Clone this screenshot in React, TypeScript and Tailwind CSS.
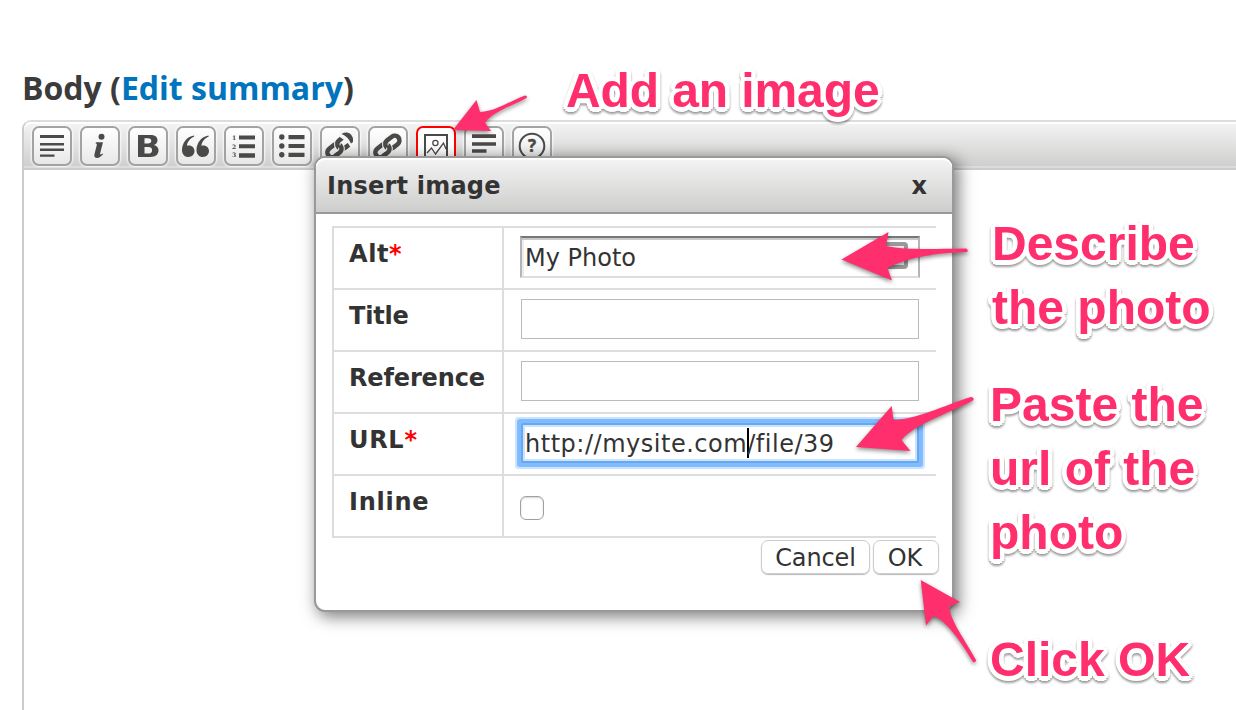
import React from "react";

const INK = "#4a4a48";
const FACE = "#f6f6f6";

function ToolButton({ active = false, children }: { active?: boolean; children: React.ReactNode }) {
  return (
    <div
      className={
        "flex h-10 w-10 shrink-0 items-center justify-center rounded-[7px] border-2 bg-gradient-to-b from-white " +
        (active
          ? "border-[#f00] to-white"
          : "border-[#a3a3a3] to-[#e8e8e8] shadow-[0_0_2px_1px_rgba(255,255,255,0.8)]")
      }
    >
      {children}
    </div>
  );
}

function Glyph({ children }: { children: React.ReactNode }) {
  return (
    <svg width="36" height="36" viewBox="2 2 36 36" className="block" fill={INK}>
      {children}
    </svg>
  );
}

function Chain() {
  return (
    <g fill="none" transform="rotate(-38 20 20)">
      <rect x="5" y="15.500" width="15.500" height="9.500" rx="4.750" stroke={INK} strokeWidth="4.500" />
      <rect x="18" y="15" width="15.500" height="9.500" rx="4.750" stroke={FACE} strokeWidth="6.500" />
      <rect x="18" y="15" width="15.500" height="9.500" rx="4.750" stroke={INK} strokeWidth="4.500" />
      <path d="M13.500 25h2.300a4.700 4.700 0 0 0 4.700-4.700" stroke={FACE} strokeWidth="6.500" />
      <path d="M10.500 25h5.300a4.700 4.700 0 0 0 4.700-4.700v-.8" stroke={INK} strokeWidth="4.500" />
    </g>
  );
}

function Toolbar() {
  return (
    <div className="flex h-[46px] gap-2 rounded-tl-[7px] border-b-2 border-[#dcdcdc] bg-gradient-to-b from-[#f4f4f4] to-[#cfd0ce] pl-2 pt-[4px] shadow-[inset_0_2px_0_#fff]">
      <ToolButton>
        <Glyph>
          <path d="M8 9h24v3H8zM8 17h24v2.400H8zM8 22.600h24V25H8zM8 28.400h14.500v2.400H8z" />
        </Glyph>
      </ToolButton>
      <ToolButton>
        <Glyph>
          <circle cx="21.500" cy="10.800" r="3" />
          <path d="M16 16.200h7l-2.900 11.300c-.3 1.300.8 1.200 2.400-.1l.6.900c-2.200 2.400-4 3.600-6 3.600-2.500 0-3.200-1.700-2.600-4l2.300-9c.2-1-.3-1.300-1.300-1.300z" />
        </Glyph>
      </ToolButton>
      <ToolButton>
        <Glyph>
          <path
            fillRule="evenodd"
            d="M10 9h12c5 0 7.500 1.800 7.500 5.200 0 2.300-1.300 4-3.600 4.700 3 .7 4.600 2.600 4.600 5.400 0 4.200-3 6.700-8.200 6.700H10zM16.500 12.200v5.300h3.300c2.300 0 3.500-.9 3.500-2.700 0-1.700-1.200-2.600-3.500-2.600zM16.500 20.900v6.700h3.800c2.500 0 3.800-1.200 3.800-3.400s-1.300-3.300-3.900-3.300z"
          />
        </Glyph>
      </ToolButton>
      <ToolButton>
        <Glyph>
          <path d="M18 9.500C10.500 10.500 6 17.500 6 24c0 4.300 2.600 7 6.400 7 3.500 0 6.100-2.500 6.100-5.900 0-3.300-2.400-5.700-5.600-5.700-.8 0-1.600.2-2 .4.300-3.400 3-7.600 7.400-9.200z" />
          <path d="M32.500 9.500c-7.500 1-12 8-12 14.500 0 4.300 2.600 7 6.400 7 3.500 0 6.100-2.500 6.100-5.900 0-3.300-2.400-5.700-5.600-5.700-.8 0-1.600.2-2 .4.300-3.400 3-7.600 7.400-9.200z" />
        </Glyph>
      </ToolButton>
      <ToolButton>
        <Glyph>
          <path d="M15 9.500h16v4H15zM15 18.300h16v4H15zM15 27.200h16v4.600H15z" />
          <g fontFamily="DejaVu Serif, serif" fontWeight="bold" fontSize="6">
            <text x="8" y="14.200">1</text>
            <text x="8" y="22.700">2</text>
            <text x="8" y="31.200">3</text>
          </g>
        </Glyph>
      </ToolButton>
      <ToolButton>
        <Glyph>
          <path d="M16.500 9h16v4.200h-16zM16.500 18h16v4h-16zM16.500 26.800h16V31h-16z" />
          <circle cx="9.800" cy="11" r="2.700" />
          <circle cx="9.800" cy="20" r="2.700" />
          <circle cx="9.800" cy="28.800" r="2.700" />
        </Glyph>
      </ToolButton>
      <ToolButton>
        <Glyph>
          <Chain />
          <path d="M19 4h17v18h-5L27.500 16.500 20 11z" fill={FACE} />
          <path d="M21.500 8C26.500 5 31.500 7 33 12.500v3.500l-2 1.500C29 13 26.500 10 21.500 8z" />
        </Glyph>
      </ToolButton>
      <ToolButton>
        <Glyph>
          <Chain />
        </Glyph>
      </ToolButton>
      <ToolButton active>
        <Glyph>
          <g fill="none" stroke={INK}>
            <path d="M9 9h22v23H9z" strokeWidth="2" />
            <circle cx="19.400" cy="17" r="2.600" strokeWidth="1.300" />
            <path d="M11 27l4.500-5 4 6 8-11 2.500 6" strokeWidth="1.300" />
          </g>
        </Glyph>
      </ToolButton>
      <ToolButton>
        <Glyph>
          <path d="M8 8.300h24v3.800H8zM8 16.300h24v3.500H8zM8 23.200h14.500v3.500H8z" />
        </Glyph>
      </ToolButton>
      <ToolButton>
        <Glyph>
          <circle cx="20" cy="20" r="12.300" fill="none" stroke={INK} strokeWidth="2" />
          <text
            x="20"
            y="26"
            textAnchor="middle"
            fontFamily="Open Sans, sans-serif"
            fontWeight="bold"
            fontSize="17"
            stroke={INK}
            strokeWidth="0.500"
          >
            ?
          </text>
        </Glyph>
      </ToolButton>
    </div>
  );
}

function Row({
  label,
  spacing = "tracking-[-0.2px]",
  required,
  children,
}: {
  label: string;
  spacing?: string;
  required?: boolean;
  children?: React.ReactNode;
}) {
  return (
    <div className="flex h-[62px] border-b-2 border-[#ddd]">
      <div
        className={`w-[170px] shrink-0 border-r-2 border-[#ddd] pl-[15px] pt-[10px] font-bold leading-8 ${spacing}`}
      >
        {label}
        {required && <span className="text-[#f00]">*</span>}
      </div>
      {children}
    </div>
  );
}

function Dialog() {
  return (
    <div className="absolute left-[314px] top-[156px] h-[456px] w-[640px] rounded-[11px] border-2 border-[#999] bg-white font-['DejaVu_Sans',Verdana,sans-serif] text-[24px] text-[#333] shadow-[4px_4px_16px_1px_rgba(0,0,0,0.5)]">
      <div className="flex h-[56px] items-center justify-between rounded-t-[9px] border-b-2 border-[#999] bg-gradient-to-b from-[#f4f4f4] to-[#cdcecc] pl-[11px] pr-[25px] font-bold shadow-[inset_0_2px_0_#fff]">
        <span className="pt-[2px] tracking-[0.22px]">Insert image</span>
        <span className="pt-[2px]">x</span>
      </div>
      <div className="px-4 pt-3">
        <div className="border-l-2 border-t-2 border-[#ddd]">
          <Row label="Alt" spacing="tracking-[0.6px]" required>
            <div className="ml-4 mt-2 flex h-[42px] w-[400px] items-center justify-between border-2 border-b-[#ddd] border-l-[#b5b5b5] border-r-[#b5b5b5] border-t-[#777] pl-[3px] pr-[10px] shadow-[inset_0_2px_0_#c8c8c8,inset_2px_0_0_#ececec]">
              <span className="pt-px">My Photo</span>
              <span className="mt-[-4px] h-[27px] w-[28px] rounded-[4px] border-4 border-[#999] bg-[#eee]" />
            </div>
          </Row>
          <Row label="Title">
            <div className="ml-[17px] mt-[9px] h-10 w-[398px] border border-[#bbb]" />
          </Row>
          <Row label="Reference" spacing="tracking-[-0.15px]">
            <div className="ml-[17px] mt-[9px] h-10 w-[398px] border border-[#bbb]" />
          </Row>
          <Row label="URL" spacing="tracking-[0.7px]" required>
            <div className="ml-[17px] mt-[9px] flex h-10 w-[398px] items-center rounded-[1px] border-2 border-[#68a8f0] pl-[2px] tracking-[0.52px] shadow-[0_0_0_4px_#7fbbfd,0_0_0_6px_#cae3ff,inset_0_0_0_2px_#cae3ff] [font-variant-ligatures:none]">
              <span className="whitespace-nowrap pt-px">http://mysite.com</span>
              <span className="-mr-[2px] h-[30px] w-[2px] bg-black" />
              <span className="pt-px">/file/39</span>
            </div>
          </Row>
          <Row label="Inline" spacing="tracking-[0.75px]">
            <div className="ml-4 mt-5 h-6 w-6 rounded-[6px] border border-[#a0a0a0] shadow-[inset_0_1px_2px_rgba(0,0,0,0.18)]" />
          </Row>
        </div>
      </div>
      <div className="flex justify-end gap-[3px] pr-[13px] pt-[2px]">
        <div className="flex h-[34px] w-[109px] items-center justify-center rounded-[7px] border border-[#ccc] pt-[2px] tracking-[-0.1px] shadow-[0_1px_1px_#bbb]">
          Cancel
        </div>
        <div className="flex h-[34px] w-[66px] items-center justify-center rounded-[7px] border border-[#ccc] pr-[2px] pt-[2px] tracking-[-0.1px] shadow-[0_1px_1px_#bbb]">
          OK
        </div>
      </div>
    </div>
  );
}

// A ring of unblurred shadows gives the lettering a white outline with round corners.
const NOTE =
  "absolute whitespace-nowrap font-['Liberation_Sans',Arial,sans-serif] text-[48px] font-bold leading-[64px] text-[#ff2e6c] [text-shadow:4.5px_0_0_#fff,3.9px_2.25px_0_#fff,2.25px_3.9px_0_#fff,0_4.5px_0_#fff,-2.25px_3.9px_0_#fff,-3.9px_2.25px_0_#fff,-4.5px_0_0_#fff,-3.9px_-2.25px_0_#fff,-2.25px_-3.9px_0_#fff,0_-4.5px_0_#fff,2.25px_-3.9px_0_#fff,3.9px_-2.25px_0_#fff] drop-shadow-[0_2px_1px_rgba(0,0,0,0.4)]";

export default function App() {
  return (
    <div className="relative flex h-[710px] w-[1236px] flex-col overflow-hidden bg-white pl-[22px] pt-[66px]">
      <h1 className="h-[54px] font-['Open_Sans','Noto_Sans',sans-serif] text-[32px] font-bold leading-[44px] text-[#3b3b3b]">
        Body (<span className="text-[#0074bd]">Edit summary</span>)
      </h1>
      <div className="flex grow flex-col rounded-tl-[9px] border-l-2 border-t-2 border-l-[#ccc] border-t-[#ddd]">
        <Toolbar />
        <div className="grow border-t-2 border-[#ccc]" />
      </div>

      <Dialog />

      <div className={`${NOTE} left-[566px] top-[59px] tracking-[-0.1px]`}>Add an image</div>
      <div className={`${NOTE} left-[992px] top-[212px]`}>
        Describe
        <br />
        the photo
      </div>
      <div className={`${NOTE} left-[990px] top-[373px]`}>
        Paste the
        <br />
        url of the
        <br />
        photo
      </div>
      <div className={`${NOTE} left-[990px] top-[628px]`}>Click OK</div>

      <svg
        className="pointer-events-none absolute left-0 top-0 drop-shadow-[0_2px_2px_rgba(0,0,0,0.45)]"
        width="1236"
        height="710"
        fill="#ff2e6c"
      >
        <path d="M453 130L476.500 100L480 112C495 112 512 100 525 95.500Q528 96 526.500 98C510 107 494 111 485 122.500L491 131Z" />
        <path d="M841.500 259.500L888.500 232L886 246C905 250 930 249 966 248.500Q969 250 967 252C930 253 905 259 887.500 268L892 280.500Z" />
        <path d="M856 447L891.700 406L893.500 420C915 420 945 405 971 397Q975 397.500 973 400.500C945 415 915 424 901.500 440L910.500 451Z" />
        <path d="M920.700 580L960 602L949 606.500C950 620 965 640 976 660Q976 663 973 662C958 637 945 620 933.500 616L926 625.500Z" />
      </svg>
    </div>
  );
}
